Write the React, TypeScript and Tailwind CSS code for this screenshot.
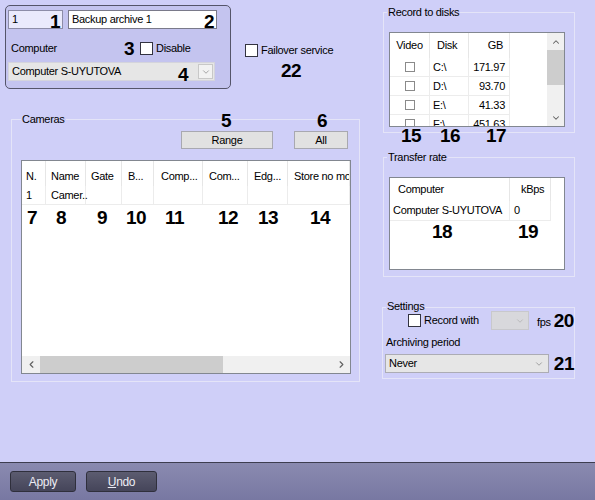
import { ChevronDown, ChevronLeft, ChevronRight, ChevronUp } from "lucide-react";

const Num = ({ children, className = "" }: { children: string; className?: string }) => (
  <span className={`text-[19px] font-bold leading-none tracking-[-0.5px] text-black ${className}`}>
    {children}
  </span>
);

const Check = ({ small = false }: { small?: boolean }) =>
  small ? (
    <span className="block h-[10px] w-[10px] border border-[#8a8a8a] bg-white" />
  ) : (
    <span className="block h-[13px] w-[13px] border border-[#333340] bg-white" />
  );

const camCols = [
  { w: "w-[24px]", pl: "pl-[4px]", head: "N.", val: "1", num: "7", npl: "pl-[5px]" },
  { w: "w-[40px]", pl: "pl-[5px]", head: "Name", val: "Camer..", num: "8", npl: "pl-[10px]" },
  { w: "w-[36px]", pl: "pl-[5px]", head: "Gate", val: "", num: "9", npl: "pl-[11px]" },
  { w: "w-[32px]", pl: "pl-[6px]", head: "B...", val: "", num: "10", npl: "pl-[4px]" },
  { w: "w-[49px]", pl: "pl-[7px]", head: "Comp...", val: "", num: "11", npl: "pl-[11px]" },
  { w: "w-[45px]", pl: "pl-[6px]", head: "Com...", val: "", num: "12", npl: "pl-[15px]" },
  { w: "w-[40px]", pl: "pl-[6px]", head: "Edg...", val: "", num: "13", npl: "pl-[10px]" },
  { w: "w-[62px]", pl: "pl-[6px]", head: "Store no mode", val: "", num: "14", npl: "pl-[22px]" },
];

const disks = [
  { d: "C:\\", gb: "171.97" },
  { d: "D:\\", gb: "93.70" },
  { d: "E:\\", gb: "41.33" },
  { d: "F:\\", gb: "451.63" },
];

const GroupLabel = ({ children, className = "" }: { children: string; className?: string }) => (
  <span className={`absolute bg-[#cfcff8] px-[1px] leading-[13px] ${className}`}>{children}</span>
);

export default function App() {
  return (
    <div className="flex h-[500px] w-[595px] flex-col overflow-hidden bg-[#cfcff8] font-['Liberation_Sans',Arial,sans-serif] text-[11px] tracking-[-0.3px] text-black">
      <div className="flex flex-1">
        {/* left column */}
        <div className="flex w-[380px] flex-col">
          <div className="flex items-start pl-[5px] pt-[5px]">
            <div className="relative h-[84px] w-[226px] rounded-[5px] border border-[#55556a] bg-[#c4c4ef] pl-[2px] pt-[4px]">
              <div className="flex gap-[5px]">
                <div className="relative flex h-[19px] w-[55px] items-center border border-[#8d8da8] bg-[#eaeafc] pl-[3px]">
                  1
                  <Num className="absolute left-[41px] top-[1px]">1</Num>
                </div>
                <div className="relative flex h-[19px] w-[149px] items-center border border-[#7a7a8a] bg-white pl-[3px]">
                  Backup archive 1
                  <Num className="absolute left-[135px] top-[1px]">2</Num>
                </div>
              </div>
              <div className="mt-[13px] flex h-[13px] items-center pl-[3px]">
                <span className="w-[113px]">Computer</span>
                <Num className="w-[16px]">3</Num>
                <Check />
                <span className="ml-[3px]">Disable</span>
              </div>
              <div className="relative mt-[7px] flex h-[19px] w-[207px] items-center border border-[#d4d4dc] bg-[#e6e6e6] pl-[3px]">
                Computer S-UYUTOVA
                <Num className="absolute left-[169px] top-[2px]">4</Num>
                <span className="ml-auto mr-[1px] flex h-[15px] w-[15px] items-center justify-center border border-[#c8c8c8] bg-[#f2f2f2]">
                  <ChevronDown size={10} strokeWidth={1.5} className="text-[#777]" />
                </span>
              </div>
            </div>
            <div className="ml-[14px] mt-[37px] flex flex-col">
              <div className="flex items-center">
                <Check />
                <span className="ml-[3px]">Failover service</span>
              </div>
              <Num className="ml-[36px] mt-[2px]">22</Num>
            </div>
          </div>

          <div className="relative ml-[11px] mt-[30px] flex h-[263px] w-[349px] flex-col border border-[#e4e4f8]">
            <GroupLabel className="-top-[7px] left-[9px]">Cameras</GroupLabel>
            <Num className="absolute -top-[9px] left-[209px]">5</Num>
            <Num className="absolute -top-[9px] left-[305px]">6</Num>
            <div className="mt-[11px] flex">
              <button className="ml-[169px] flex h-[18px] w-[92px] items-center justify-center border border-[#a8a8b0] bg-[#e1e1e1]">
                Range
              </button>
              <button className="ml-[21px] flex h-[18px] w-[54px] items-center justify-center border border-[#a8a8b0] bg-[#e1e1e1]">
                All
              </button>
            </div>
            <div className="ml-[9px] mt-[11px] flex h-[214px] w-[330px] flex-col overflow-hidden border border-[#828790] bg-white">
              <div className="flex h-[25px]">
                {camCols.map((c) => (
                  <div
                    key={c.head}
                    className={`${c.w} ${c.pl} flex shrink-0 items-center overflow-hidden whitespace-nowrap border-r border-[#e6e6e6] pt-[6px]`}
                  >
                    {c.head}
                  </div>
                ))}
              </div>
              <div className="flex h-[19px] border-b border-[#ececec]">
                {camCols.map((c) => (
                  <div
                    key={c.head}
                    className={`${c.w} ${c.pl} flex shrink-0 items-center border-r border-[#ececec]`}
                  >
                    {c.val}
                  </div>
                ))}
              </div>
              <div className="mt-[3px] flex">
                {camCols.map((c) => (
                  <div key={c.head} className={`${c.w} ${c.npl} shrink-0`}>
                    <Num>{c.num}</Num>
                  </div>
                ))}
              </div>
              <div className="flex-1" />
              <div className="flex h-[17px] items-stretch bg-[#f0f0f0]">
                <span className="flex w-[18px] items-center justify-center">
                  <ChevronLeft size={11} strokeWidth={2.5} className="text-[#606060]" />
                </span>
                <span className="w-[183px] bg-[#cdcdcd]" />
                <span className="flex-1" />
                <span className="flex w-[18px] items-center justify-center">
                  <ChevronRight size={11} strokeWidth={2.5} className="text-[#606060]" />
                </span>
              </div>
            </div>
          </div>
        </div>

        {/* right column */}
        <div className="flex w-[215px] flex-col">
          <div className="relative ml-[3px] mt-[12px] h-[121px] w-[192px] border border-[#e4e4f8]">
            <GroupLabel className="-top-[7px] left-[3px]">Record to disks</GroupLabel>
            <div className="ml-[5px] mt-[19px] flex h-[95px] w-[176px] overflow-hidden border border-[#828790] bg-white">
              <div className="flex-1">
                <div className="flex h-[25px] items-center">
                  <span className="flex h-full w-[40px] items-center justify-center border-r border-[#e6e6e6]">Video</span>
                  <span className="flex h-full w-[39px] items-center border-r border-[#e6e6e6] pl-[7px]">Disk</span>
                  <span className="flex h-full w-[41px] items-center justify-end border-r border-[#e6e6e6] pr-[6px]">GB</span>
                </div>
                {disks.map((r) => (
                  <div key={r.d} className="flex h-[19px] w-[120px] border-b border-[#ececec]">
                    <span className="flex w-[40px] items-center justify-center border-r border-[#ececec]">
                      <Check small />
                    </span>
                    <span className="flex w-[39px] items-center border-r border-[#ececec] pl-[3px]">{r.d}</span>
                    <span className="flex w-[41px] items-center justify-end border-r border-[#ececec] pr-[4px]">{r.gb}</span>
                  </div>
                ))}
              </div>
              <div className="flex w-[17px] flex-col bg-[#f0f0f0]">
                <span className="flex h-[17px] items-center justify-center">
                  <ChevronUp size={10} strokeWidth={2.5} className="text-[#606060]" />
                </span>
                <span className="h-[35px] bg-[#cdcdcd]" />
                <span className="flex-1" />
                <span className="flex h-[17px] items-center justify-center">
                  <ChevronDown size={10} strokeWidth={2.5} className="text-[#606060]" />
                </span>
              </div>
            </div>
            <div className="-mt-[1px] ml-[17px] flex">
              <Num className="w-[39px]">15</Num>
              <Num className="w-[46px]">16</Num>
              <Num>17</Num>
            </div>
          </div>

          <div className="relative ml-[3px] mt-[24px] h-[120px] w-[192px] border border-[#e4e4f8]">
            <GroupLabel className="-top-[7px] left-[3px]">Transfer rate</GroupLabel>
            <div className="ml-[5px] mt-[19px] h-[93px] w-[176px] border border-[#828790] bg-white">
              <div className="flex h-[23px]">
                <span className="flex w-[120px] items-center border-r border-[#e6e6e6] pl-[8px]">Computer</span>
                <span className="flex w-[41px] items-center border-r border-[#e6e6e6] pl-[11px]">kBps</span>
              </div>
              <div className="flex h-[20px] w-[161px] border-b border-[#ececec]">
                <span className="flex w-[120px] items-center whitespace-nowrap border-r border-[#ececec] pl-[3px]">
                  Computer S-UYUTOVA
                </span>
                <span className="flex w-[41px] items-center border-r border-[#ececec] pl-[4px]">0</span>
              </div>
              <div className="mt-[1px] flex">
                <Num className="w-[128px] pl-[42px]">18</Num>
                <Num>19</Num>
              </div>
            </div>
          </div>

          <div className="relative ml-[2px] mt-[30px] h-[72px] w-[193px] border border-[#e4e4f8]">
            <GroupLabel className="-top-[8px] left-[3px]">Settings</GroupLabel>
            <div className="ml-[25px] mt-[3px] flex h-[19px] items-center">
              <Check />
              <span className="ml-[3px] w-[67px]">Record with</span>
              <span className="flex h-[19px] w-[38px] items-center justify-end border border-[#c8c8cc] bg-[#d8d8dc] pr-[3px]">
                <ChevronDown size={10} strokeWidth={1.5} className="text-[#a8a8a8]" />
              </span>
              <span className="ml-[8px] mt-[3px]">fps</span>
              <Num className="ml-[3px]">20</Num>
            </div>
            <div className="ml-[3px] mt-[6px] leading-[13px]">Archiving period</div>
            <div className="ml-[2px] mt-[5px] flex items-center">
              <div className="flex h-[19px] w-[180px] items-center border border-[#acacb4] bg-[#e6e6e6] pl-[3px]">
                Never
                <ChevronDown size={10} strokeWidth={1.5} className="ml-auto mr-[4px] text-[#777]" />
              </div>
              <Num className="ml-[5px]">21</Num>
            </div>
          </div>
        </div>
      </div>

      <div className="flex h-[38px] gap-[10px] border-t border-[#3e3e50] bg-gradient-to-b from-[#8a8ab0] to-[#7878a2] pl-[10px] pt-[8px]">
        <button className="flex h-[21px] w-[66px] items-center justify-center rounded-[3px] border border-[#2f2f3c] bg-gradient-to-b from-[#5c5c70] to-[#45455a] text-[12px] text-[#ececf4]">
          Apply
        </button>
        <button className="flex h-[21px] w-[71px] items-center justify-center rounded-[3px] border border-[#2f2f3c] bg-gradient-to-b from-[#5c5c70] to-[#45455a] text-[12px] text-[#ececf4]">
          <span className="underline">U</span>ndo
        </button>
      </div>
    </div>
  );
}
